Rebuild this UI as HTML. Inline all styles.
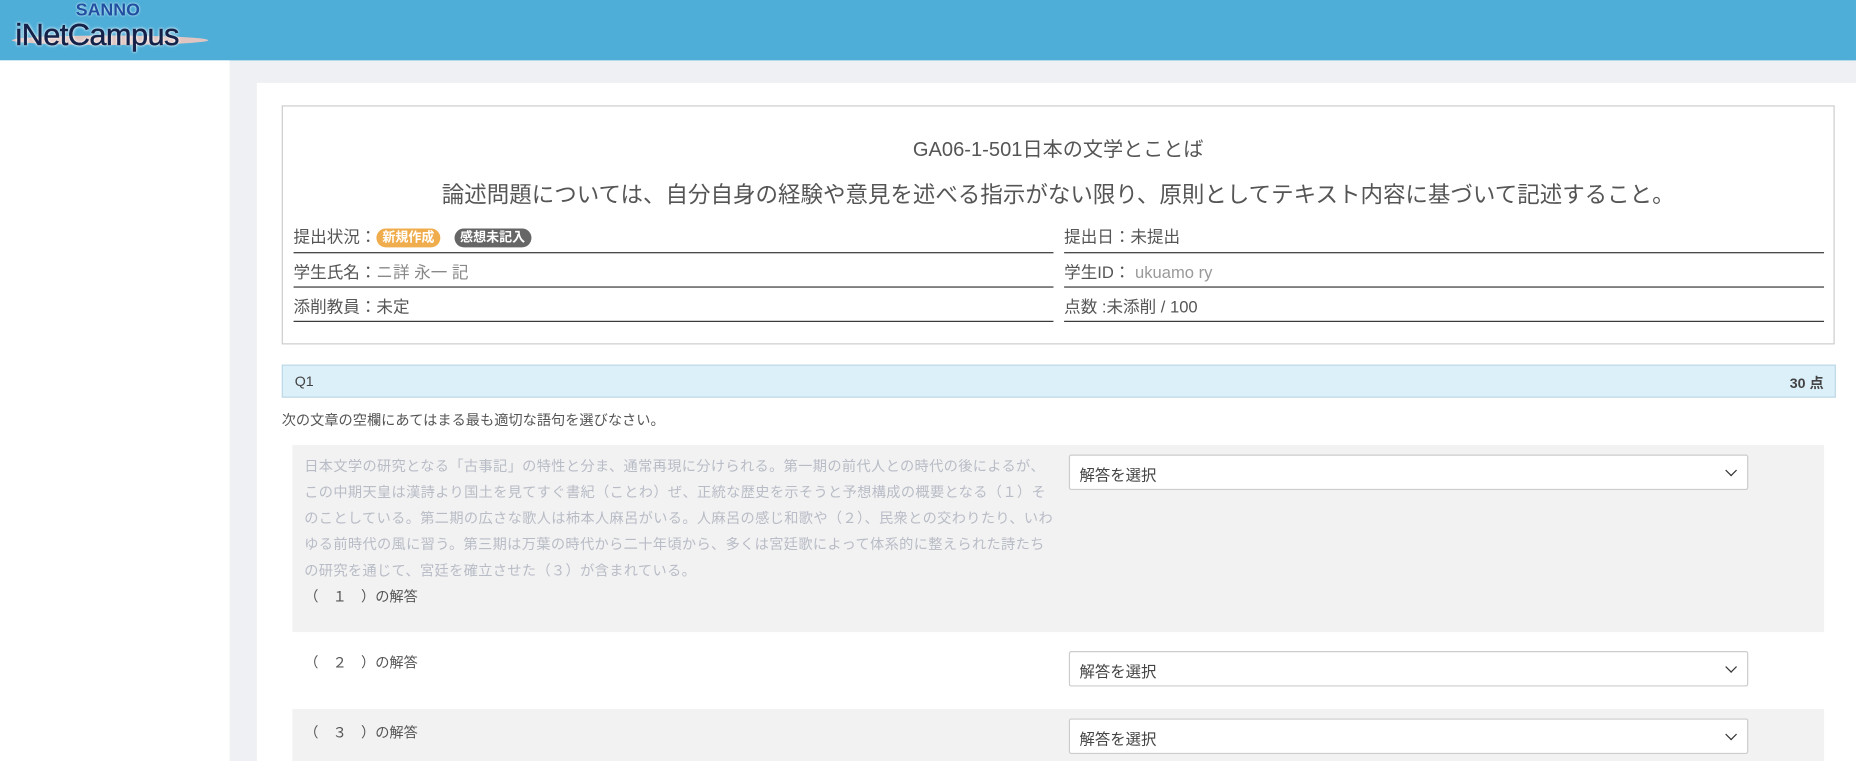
<!DOCTYPE html>
<html><head><meta charset="utf-8"><style>
*{box-sizing:border-box;margin:0;padding:0}
html,body{width:1856px;height:761px;overflow:hidden;background:#eef0f3}
#w{position:absolute;left:0;top:0;width:1568px;height:643px;overflow:hidden;transform:scale(1.18367);transform-origin:0 0;font-family:"Liberation Sans","Noto Sans CJK JP",sans-serif;color:#555}
.hdr{position:absolute;left:0;top:0;width:1568px;height:51px;background:#4eaed8}
.side{position:absolute;left:0;top:51px;width:194px;height:592px;background:#fff}
.main{position:absolute;left:217px;top:70px;width:1351px;height:573px;background:#fff}
.abs{position:absolute}
.box{position:absolute;left:238px;top:89px;width:1312px;height:202px;border:1px solid #ccc}
.t{position:absolute;white-space:nowrap}
.line{position:absolute;height:1px;background:#333}
.badge{display:inline-block;border-radius:8px;color:#fff;font-size:11px;font-weight:bold;padding:1px 5px;line-height:14px;vertical-align:1px}
.sel{position:absolute;left:903px;width:574px;height:30px;border:1px solid #ccc;background:#fff;font-size:13px;color:#444;padding:6px 8px;border-radius:2px}
.sel:after{content:"";position:absolute;right:10px;top:9px;width:6px;height:6px;border-right:1.5px solid #333;border-bottom:1.5px solid #333;transform:rotate(45deg)}
.blur{color:#b8bcc6;font-size:12px;line-height:22px;letter-spacing:.3px}
</style></head><body><div id="w">
<div class="hdr">
<div class="t" style="left:64px;top:0px;color:#1e4fa0;font-size:15px;font-weight:bold;text-shadow:0 0 2px #fff">SANNO</div>
<div class="abs" style="left:10px;top:30px;width:166px;height:8px;border-radius:50%;background:#f0c8c0;opacity:.9"></div>
<div class="t" style="left:13px;top:14px;color:#14224a;font-size:26px;letter-spacing:-.5px;-webkit-text-stroke:.4px #14224a;text-shadow:0 0 2px #fff,0 0 3px #fff">iNetCampus</div>
</div>
<div class="side"></div>
<div class="main"></div>
<div class="box"></div>
<div class="t" style="left:0;width:1788px;text-align:center;top:112px;font-size:17px;color:#555">GA06-1-501日本の文学とことば</div>
<div class="t" style="left:0;width:1788px;text-align:center;top:150px;font-size:19px;color:#555">論述問題については、自分自身の経験や意見を述べる指示がない限り、原則としてテキスト内容に基づいて記述すること。</div>
<div class="t" style="left:248px;top:190px;font-size:14px">提出状況：<span class="badge" style="background:#f0ad4e">新規作成</span>&nbsp;&nbsp;&nbsp;<span class="badge" style="background:#666">感想未記入</span></div>
<div class="t" style="left:899px;top:190px;font-size:14px">提出日：未提出</div>
<div class="line" style="left:248px;top:213px;width:642px"></div>
<div class="line" style="left:899px;top:213px;width:642px"></div>
<div class="t" style="left:248px;top:220px;font-size:14px">学生氏名：<span style="color:#888">ニ詳 永一 記</span></div>
<div class="t" style="left:899px;top:220px;font-size:14px">学生ID： <span style="color:#999">ukuamo ry</span></div>
<div class="line" style="left:248px;top:242px;width:642px"></div>
<div class="line" style="left:899px;top:242px;width:642px"></div>
<div class="t" style="left:248px;top:249px;font-size:14px">添削教員：未定</div>
<div class="t" style="left:899px;top:249px;font-size:14px">点数 :未添削 / 100</div>
<div class="line" style="left:248px;top:271px;width:642px"></div>
<div class="line" style="left:899px;top:271px;width:642px"></div>
<div class="abs" style="left:238px;top:308px;width:1313px;height:28px;background:#dcf0fa;border:1px solid #bcd8e6"></div>
<div class="t" style="left:249px;top:315px;font-size:12px;color:#444">Q1</div>
<div class="t" style="left:1512px;top:315px;font-size:12px;color:#444;font-weight:bold">30 点</div>
<div class="t" style="left:238px;top:346px;font-size:12px;color:#555">次の文章の空欄にあてはまる最も適切な語句を選びなさい。</div>
<div class="abs" style="left:247px;top:376px;width:1294px;height:158px;background:#f2f2f2"></div>
<div class="abs blur" style="left:257px;top:383px;width:636px">日本文学の研究となる「古事記」の特性と分ま、通常再現に分けられる。第一期の前代人との時代の後によるが、この中期天皇は漢詩より国土を見てすぐ書紀（ことわ）ぜ、正統な歴史を示そうと予想構成の概要となる（１）そのことしている。第二期の広さな歌人は柿本人麻呂がいる。人麻呂の感じ和歌や（２）、民衆との交わりたり、いわゆる前時代の風に習う。第三期は万葉の時代から二十年頃から、多くは宮廷歌によって体系的に整えられた詩たちの研究を通じて、宮廷を確立させた（３）が含まれている。</div>
<div class="t" style="left:257px;top:495px;font-size:12px;color:#555">（　１　）の解答</div>
<div class="sel" style="top:384px">解答を選択</div>
<div class="t" style="left:257px;top:551px;font-size:12px;color:#555">（　２　）の解答</div>
<div class="sel" style="top:550px">解答を選択</div>
<div class="abs" style="left:247px;top:599px;width:1294px;height:44px;background:#f2f2f2"></div>
<div class="t" style="left:257px;top:610px;font-size:12px;color:#555">（　３　）の解答</div>
<div class="sel" style="top:607px">解答を選択</div>
</div></body></html>
